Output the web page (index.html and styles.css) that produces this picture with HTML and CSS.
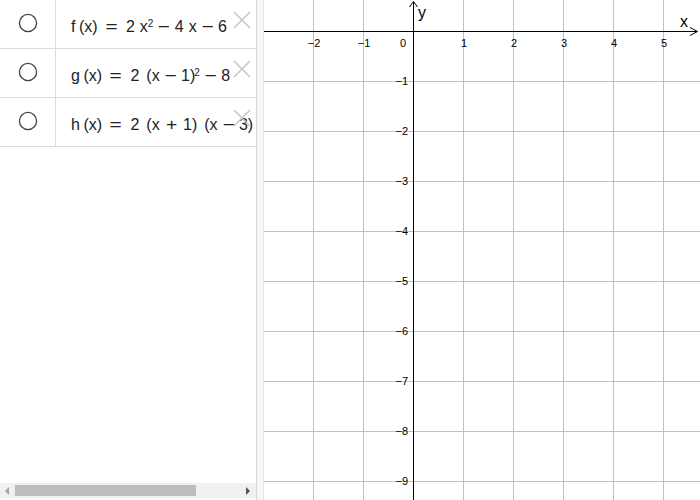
FILE: index.html
```html
<!DOCTYPE html>
<html>
<head>
<meta charset="utf-8">
<link rel="stylesheet" href="styles.css">
</head>
<body>
<div class="app">
  <div class="algebra">
    <div class="rows">
      <div class="row">
        <div class="marble"><svg width="22" height="22" viewBox="0 0 22 22"><circle cx="11" cy="11" r="8.6" fill="none" stroke="#444" stroke-width="1.3"/></svg></div>
        <div class="formula">f<span class="g1"></span>(x)<span class="eq">=</span>2<span class="g2"></span>x<sup>2</sup><span class="op">−</span>4<span class="g2"></span>x<span class="op">−</span>6</div>
        <svg class="close" width="18" height="18" viewBox="0 0 18 18"><path d="M1 1 L17 17 M17 1 L1 17" stroke="#c8c8c8" stroke-width="1.6" fill="none"/></svg>
      </div>
      <div class="row">
        <div class="marble"><svg width="22" height="22" viewBox="0 0 22 22"><circle cx="11" cy="11" r="8.6" fill="none" stroke="#444" stroke-width="1.3"/></svg></div>
        <div class="formula">g<span class="g1"></span>(x)<span class="eq">=</span>2<span class="g3"></span>(x<span class="op">−</span>1)<sup class="tight">2</sup><span class="op">−</span>8</div>
        <svg class="close" width="18" height="18" viewBox="0 0 18 18"><path d="M1 1 L17 17 M17 1 L1 17" stroke="#c8c8c8" stroke-width="1.6" fill="none"/></svg>
      </div>
      <div class="row">
        <div class="marble"><svg width="22" height="22" viewBox="0 0 22 22"><circle cx="11" cy="11" r="8.6" fill="none" stroke="#444" stroke-width="1.3"/></svg></div>
        <div class="formula">h<span class="g1"></span>(x)<span class="eq">=</span>2<span class="g3"></span>(x<span class="op plus">+</span>1)<span class="g3"></span>(x<span class="op">−</span>3)</div>
        <svg class="close" width="18" height="18" viewBox="0 0 18 18"><path d="M1 1 L17 17 M17 1 L1 17" stroke="#c8c8c8" stroke-width="1.6" fill="none"/></svg>
      </div>
    </div>
    <div class="scrollbar">
      <span class="arrow-left"></span>
      <div class="track"><div class="thumb"></div></div>
      <span class="arrow-right"></span>
    </div>
  </div>
  <div class="splitter"></div>
  <div class="graphics">
    <svg width="436" height="500" viewBox="0 0 436 500">
      <g stroke="#c0c0c0" stroke-width="1">
        <line x1="49.5" y1="0" x2="49.5" y2="500"/>
        <line x1="99.5" y1="0" x2="99.5" y2="500"/>
        <line x1="199.5" y1="0" x2="199.5" y2="500"/>
        <line x1="249.5" y1="0" x2="249.5" y2="500"/>
        <line x1="299.5" y1="0" x2="299.5" y2="500"/>
        <line x1="349.5" y1="0" x2="349.5" y2="500"/>
        <line x1="399.5" y1="0" x2="399.5" y2="500"/>
        <line x1="0" y1="81.5" x2="436" y2="81.5"/>
        <line x1="0" y1="131.5" x2="436" y2="131.5"/>
        <line x1="0" y1="181.5" x2="436" y2="181.5"/>
        <line x1="0" y1="231.5" x2="436" y2="231.5"/>
        <line x1="0" y1="281.5" x2="436" y2="281.5"/>
        <line x1="0" y1="331.5" x2="436" y2="331.5"/>
        <line x1="0" y1="381.5" x2="436" y2="381.5"/>
        <line x1="0" y1="431.5" x2="436" y2="431.5"/>
        <line x1="0" y1="481.5" x2="436" y2="481.5"/>
      </g>
      <g stroke="#000" stroke-width="1" fill="none">
        <line x1="0" y1="31.5" x2="433" y2="31.5"/>
        <path d="M426 27.5 L433.5 31.5 L426 35.5"/>
        <line x1="149.5" y1="2" x2="149.5" y2="500"/>
        <path d="M145.5 7 L149.5 1.5 L153.5 7"/>
      </g>
      <g class="lbl" text-anchor="middle">
        <text x="50" y="47">−2</text>
        <text x="100" y="47">−1</text>
        <text x="200" y="47">1</text>
        <text x="250" y="47">2</text>
        <text x="300" y="47">3</text>
        <text x="350" y="47">4</text>
        <text x="400" y="47">5</text>
      </g>
      <g class="lbl" text-anchor="end">
        <text x="142" y="47">0</text>
        <text x="144" y="85">−1</text>
        <text x="144" y="135">−2</text>
        <text x="144" y="185">−3</text>
        <text x="144" y="235">−4</text>
        <text x="144" y="285">−5</text>
        <text x="144" y="335">−6</text>
        <text x="144" y="385">−7</text>
        <text x="144" y="435">−8</text>
        <text x="144" y="485">−9</text>
      </g>
      <text class="axisname" x="416" y="27">x</text>
      <text class="axisname" x="154" y="18">y</text>
    </svg>
  </div>
</div>
</body>
</html>
```
FILE: styles.css
```css
html, body {
  margin: 0;
  padding: 0;
  background: #fff;
}
.app {
  display: flex;
  width: 700px;
  height: 500px;
  overflow: hidden;
}
.algebra {
  width: 256px;
  height: 500px;
  display: flex;
  flex-direction: column;
  overflow: hidden;
  flex: none;
}
.rows {
  flex: 1;
}
.row {
  position: relative;
  display: flex;
  height: 48px;
  border-bottom: 1px solid #dcdcdc;
}
.marble {
  width: 56px;
  border-right: 1px solid #dcdcdc;
  display: flex;
  justify-content: center;
  padding-top: 12px;
  box-sizing: border-box;
  flex: none;
}
.marble svg {
  display: block;
}
.formula {
  font-family: "Liberation Sans", Arial, sans-serif;
  font-size: 16px;
  color: #222;
  padding-left: 15px;
  padding-top: 18px;
  white-space: nowrap;
  line-height: 18px;
}
.formula sup {
  font-size: 10px;
  vertical-align: 5.5px;
  line-height: 0;
}
.formula sup.tight {
  margin-left: -1px;
}
.eq {
  display: inline-block;
  margin: 0 10px 0 9px;
  transform: scaleX(1.3);
}
.op {
  display: inline-block;
  margin: 0 6px;
  transform: scaleX(1.3);
}
.op.plus {
  margin: 0 7px;
  transform: scaleX(1.2);
}
.g1 { display: inline-block; width: 3.5px; }
.g2 { display: inline-block; width: 5px; }
.g3 { display: inline-block; width: 7px; }
.close {
  position: absolute;
  left: 233px;
  top: 11px;
}
.scrollbar {
  height: 15px;
  margin-bottom: 2px;
  background: #f1f1f1;
  display: flex;
  align-items: center;
}
.arrow-left {
  width: 0;
  height: 0;
  border-top: 4px solid transparent;
  border-bottom: 4px solid transparent;
  border-right: 4px solid #a3a3a3;
  margin-left: 5px;
  margin-right: 6px;
}
.track {
  flex: 1;
  height: 11px;
}
.thumb {
  width: 181px;
  height: 11px;
  background: #bdbdbd;
}
.arrow-right {
  width: 0;
  height: 0;
  border-top: 4px solid transparent;
  border-bottom: 4px solid transparent;
  border-left: 4px solid #505050;
  margin-right: 6px;
}
.splitter {
  width: 6px;
  height: 500px;
  background: #f7f7f7;
  border-left: 1px solid #d8d8d8;
  border-right: 1px solid #e6e6e6;
  flex: none;
}
.graphics {
  flex: 1;
  height: 500px;
}
.graphics svg {
  display: block;
}
.lbl text {
  font-family: "Liberation Sans", Arial, sans-serif;
  font-size: 11px;
  fill: #000;
}
.axisname {
  font-family: "Liberation Sans", Arial, sans-serif;
  font-size: 16px;
  fill: #000;
}
```
